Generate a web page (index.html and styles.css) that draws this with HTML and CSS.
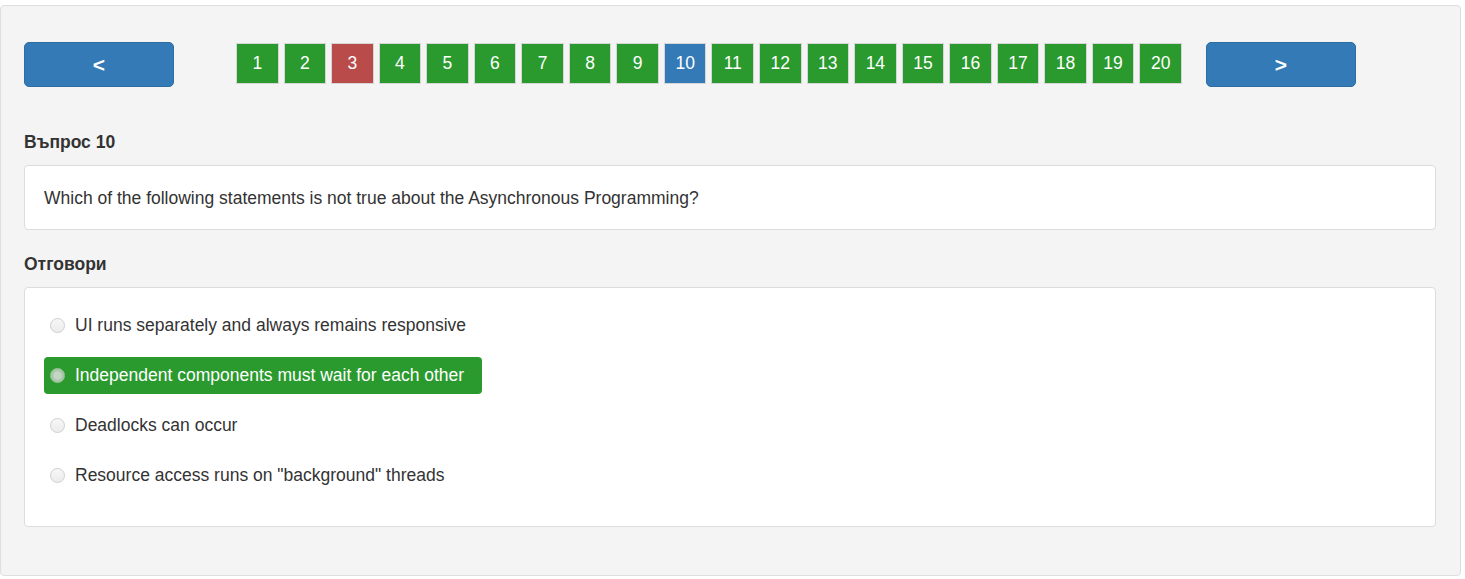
FILE: index.html
```html
<!DOCTYPE html>
<html lang="bg">
<head>
<meta charset="utf-8">
<title>Въпрос 10</title>
<link rel="stylesheet" href="styles.css">
</head>
<body>
<div class="page">
  <div class="panel">
    <div class="nav">
      <button class="nav-btn">&lt;</button>
      <div class="pages">
        <span class="pg ok">1</span>
        <span class="pg ok">2</span>
        <span class="pg bad">3</span>
        <span class="pg ok">4</span>
        <span class="pg ok">5</span>
        <span class="pg ok">6</span>
        <span class="pg ok">7</span>
        <span class="pg ok">8</span>
        <span class="pg ok">9</span>
        <span class="pg cur">10</span>
        <span class="pg ok">11</span>
        <span class="pg ok">12</span>
        <span class="pg ok">13</span>
        <span class="pg ok">14</span>
        <span class="pg ok">15</span>
        <span class="pg ok">16</span>
        <span class="pg ok">17</span>
        <span class="pg ok">18</span>
        <span class="pg ok">19</span>
        <span class="pg ok">20</span>
      </div>
      <button class="nav-btn">&gt;</button>
    </div>

    <h4 class="label q-label">Въпрос 10</h4>
    <div class="box question">Which of the following statements is not true about the Asynchronous Programming?</div>

    <h4 class="label a-label">Отговори</h4>
    <div class="box answers">
      <div class="answer"><span class="radio"></span><span>UI runs separately and always remains responsive</span></div>
      <div class="answer selected"><span class="radio"></span><span>Independent components must wait for each other</span></div>
      <div class="answer"><span class="radio"></span><span>Deadlocks can occur</span></div>
      <div class="answer"><span class="radio"></span><span>Resource access runs on "background" threads</span></div>
    </div>
  </div>
</div>
</body>
</html>
```

FILE: styles.css
```css
* { box-sizing: border-box; }
html, body { margin: 0; padding: 0; background: #fff; }
body {
  font-family: "Liberation Sans", Arial, sans-serif;
  font-size: 17.5px;
  color: #333;
}
.page { padding-top: 5px; }
.panel {
  width: 1461px;
  background: #f4f4f4;
  border: 1px solid #dedede;
  border-radius: 4px;
  padding: 36px 24px 48px 23px;
}
.nav {
  display: flex;
  align-items: flex-start;
  height: 45px;
}
.nav-btn {
  width: 150px;
  height: 45px;
  background: #337ab7;
  border: 1px solid #2e6da4;
  border-radius: 5px;
  color: #fff;
  font-family: "Liberation Sans", Arial, sans-serif;
  font-size: 21px;
  font-weight: bold;
  line-height: 43px;
  padding: 0;
  margin: 0;
}
.pages {
  display: flex;
  gap: 5.05px;
  margin: 1px 24px 0 62px;
}
.pg {
  width: 42.5px;
  height: 41px;
  display: flex;
  align-items: center;
  justify-content: center;
  color: #fff;
  font-size: 17.5px;
  border: 1px solid #d6d6d6;
}
.pg.ok { background: #2a9a2e; }
.pg.bad { background: #b94b4a; }
.pg.cur { background: #337ab7; }

.label {
  margin: 0;
  font-size: 17.5px;
  font-weight: bold;
  line-height: 20px;
  color: #333;
}
.q-label { margin-top: 45px; margin-bottom: 13px; }
.a-label { margin-top: 24px; margin-bottom: 13px; }

.box {
  background: #fff;
  border: 1px solid #dcdcdc;
  border-radius: 4px;
}
.question {
  width: 1412px;
  height: 65px;
  padding: 0 19px;
  display: flex;
  align-items: center;
  line-height: 22px;
}
.answers {
  width: 1412px;
  height: 240px;
  padding: 19px 19px 0 19px;
  display: flex;
  flex-direction: column;
  align-items: flex-start;
  gap: 13px;
}
.answer {
  display: inline-flex;
  align-items: center;
  height: 37px;
  padding: 0 18px 0 6px;
  border-radius: 4px;
  gap: 10px;
  color: #333;
}
.answer.selected {
  background: #2a9a2e;
  color: #fff;
}
.radio {
  width: 15px;
  height: 15px;
  border-radius: 50%;
  border: 1px solid #cfcfcf;
  background: linear-gradient(#f7f7f7, #ececec);
  flex: none;
}
.answer.selected .radio {
  border-color: #9cc29c;
  background: radial-gradient(circle, #c3d6c3 0 3.5px, #a8c7a8 5px);
}
```
